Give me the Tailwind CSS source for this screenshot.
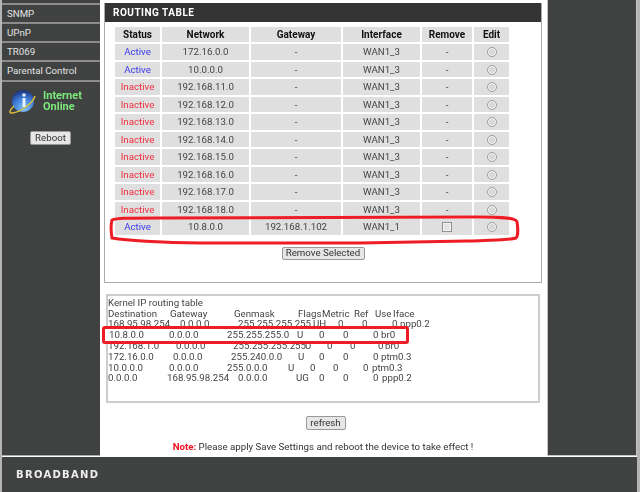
<!DOCTYPE html>
<html lang="en">
<head>
  <meta charset="UTF-8" />
  <title>Routing Table</title>
  <script src="https://cdn.jsdelivr.net/npm/@tailwindcss/browser@4"></script>
</head>
<body class="relative flex w-[640px] h-[492px] overflow-hidden bg-white font-['Roboto',sans-serif] text-[9.700px] leading-none text-[#444] blur-[0.35px]">

  <div class="w-[2px] shrink-0 bg-[#b4b4b4]"></div>

  <div class="w-[635px] shrink-0">
    <div class="flex h-[456px]">
      <!-- left menu -->
      <div class="w-[98px] shrink-0 bg-[#404242] text-[#e2e2e2] border-b border-[#aaa]">
        <div class="h-[3px]"></div>
        <div class="h-[2px] bg-[#8c8c8c]"></div>
        <div class="h-[19px] border-b-2 border-[#8c8c8c] pl-[5px] pt-[1px] flex items-center">SNMP</div>
        <div class="h-[19px] border-b-2 border-[#8c8c8c] pl-[5px] pt-[1px] flex items-center">UPnP</div>
        <div class="h-[19px] border-b-2 border-[#8c8c8c] pl-[5px] pt-[1px] flex items-center">TR069</div>
        <div class="h-[20px] border-b-2 border-[#8c8c8c] pl-[5px] flex items-center">Parental Control</div>
        <div class="flex items-center gap-[6px] pl-[7px] pt-[5px]">
          <svg width="28" height="28" viewBox="0 0 28 28">
            <defs>
              <radialGradient id="ball" cx="0.55" cy="0.85" r="0.85">
                <stop offset="0" stop-color="#7fc0f8" />
                <stop offset="0.55" stop-color="#3f7fdc" />
                <stop offset="1" stop-color="#1c2f78" />
              </radialGradient>
            </defs>
            <circle cx="14" cy="14" r="11" fill="url(#ball)" />
            <path d="M26 9C24 16 12 25 3 26C0 26 0 24 5 19" fill="none" stroke="#d8bb3e" stroke-width="1.500" />
            <circle cx="15" cy="8" r="1.700" fill="#e8f2ff" />
            <rect x="13.500" y="11" width="3" height="9" fill="#e8f2ff" />
          </svg>
          <div class="text-[#7ce87c] font-bold text-[11px] leading-[11.500px]">Internet<br />Online</div>
        </div>
        <div class="flex justify-center pt-[16px] pr-[1px]">
          <button class="w-[41px] h-[14px] bg-[#e6e6e6] border border-[#999] rounded-[2px] text-[#333]">Reboot</button>
        </div>
      </div>

      <!-- main column -->
      <div class="flex-1 pl-[4px] pt-[3px]">
        <div class="w-[438px] h-[280px] border-x-[1.500px] border-b-[1.500px] border-[#aaa]">
          <div class="h-[19px] bg-[#333] text-white font-bold text-[10px] tracking-[0.5px] pl-[8px] pt-[1px] flex items-center">ROUTING TABLE</div>
          <div class="mt-[3px] ml-[8px]">
            <table class="border-separate border-spacing-[2px] text-center w-[398px] table-fixed [&_td]:pt-[1px]">
              <colgroup>
                <col class="w-[45px]" /><col class="w-[87px]" /><col class="w-[90px]" /><col class="w-[77px]" /><col class="w-[50px]" /><col class="w-[35px]" />
              </colgroup>
              <thead class="font-bold text-[10px] text-[#111]">
                <tr class="h-[15px] [&_td]:bg-[#dfdfdf]"><td>Status</td><td>Network</td><td>Gateway</td><td>Interface</td><td>Remove</td><td>Edit</td></tr>
              </thead>
              <tbody class="[&_td]:bg-[#dfdfdf] [&_tr]:h-[15.500px]">
                <tr><td class="text-[#3a3af0]">Active</td><td>172.16.0.0</td><td>-</td><td>WAN1_3</td><td>-</td><td><span class="inline-block align-middle w-[10px] h-[10px] rounded-full border border-[#a0a0a0] bg-[#d8d8d8] shadow-[inset_0_0_0_1px_#f4f4f4]"></span></td></tr>
                <tr><td class="text-[#3a3af0]">Active</td><td>10.0.0.0</td><td>-</td><td>WAN1_3</td><td>-</td><td><span class="inline-block align-middle w-[10px] h-[10px] rounded-full border border-[#a0a0a0] bg-[#d8d8d8] shadow-[inset_0_0_0_1px_#f4f4f4]"></span></td></tr>
                <tr><td class="text-[#f03040]">Inactive</td><td>192.168.11.0</td><td>-</td><td>WAN1_3</td><td>-</td><td><span class="inline-block align-middle w-[10px] h-[10px] rounded-full border border-[#a0a0a0] bg-[#d8d8d8] shadow-[inset_0_0_0_1px_#f4f4f4]"></span></td></tr>
                <tr><td class="text-[#f03040]">Inactive</td><td>192.168.12.0</td><td>-</td><td>WAN1_3</td><td>-</td><td><span class="inline-block align-middle w-[10px] h-[10px] rounded-full border border-[#a0a0a0] bg-[#d8d8d8] shadow-[inset_0_0_0_1px_#f4f4f4]"></span></td></tr>
                <tr><td class="text-[#f03040]">Inactive</td><td>192.168.13.0</td><td>-</td><td>WAN1_3</td><td>-</td><td><span class="inline-block align-middle w-[10px] h-[10px] rounded-full border border-[#a0a0a0] bg-[#d8d8d8] shadow-[inset_0_0_0_1px_#f4f4f4]"></span></td></tr>
                <tr><td class="text-[#f03040]">Inactive</td><td>192.168.14.0</td><td>-</td><td>WAN1_3</td><td>-</td><td><span class="inline-block align-middle w-[10px] h-[10px] rounded-full border border-[#a0a0a0] bg-[#d8d8d8] shadow-[inset_0_0_0_1px_#f4f4f4]"></span></td></tr>
                <tr><td class="text-[#f03040]">Inactive</td><td>192.168.15.0</td><td>-</td><td>WAN1_3</td><td>-</td><td><span class="inline-block align-middle w-[10px] h-[10px] rounded-full border border-[#a0a0a0] bg-[#d8d8d8] shadow-[inset_0_0_0_1px_#f4f4f4]"></span></td></tr>
                <tr><td class="text-[#f03040]">Inactive</td><td>192.168.16.0</td><td>-</td><td>WAN1_3</td><td>-</td><td><span class="inline-block align-middle w-[10px] h-[10px] rounded-full border border-[#a0a0a0] bg-[#d8d8d8] shadow-[inset_0_0_0_1px_#f4f4f4]"></span></td></tr>
                <tr><td class="text-[#f03040]">Inactive</td><td>192.168.17.0</td><td>-</td><td>WAN1_3</td><td>-</td><td><span class="inline-block align-middle w-[10px] h-[10px] rounded-full border border-[#a0a0a0] bg-[#d8d8d8] shadow-[inset_0_0_0_1px_#f4f4f4]"></span></td></tr>
                <tr><td class="text-[#f03040]">Inactive</td><td>192.168.18.0</td><td>-</td><td>WAN1_3</td><td>-</td><td><span class="inline-block align-middle w-[10px] h-[10px] rounded-full border border-[#a0a0a0] bg-[#d8d8d8] shadow-[inset_0_0_0_1px_#f4f4f4]"></span></td></tr>
                <tr><td class="text-[#3a3af0]">Active</td><td>10.8.0.0</td><td>192.168.1.102</td><td>WAN1_1</td><td><span class="inline-block align-middle w-[10px] h-[10px] border border-[#909090] bg-[#e4e4e4] shadow-[inset_0_0_0_1px_#f4f4f4]"></span></td><td><span class="inline-block align-middle w-[10px] h-[10px] rounded-full border border-[#a0a0a0] bg-[#d8d8d8] shadow-[inset_0_0_0_1px_#f4f4f4]"></span></td></tr>
              </tbody>
            </table>
          </div>
          <div class="flex justify-center pt-[10px]">
            <button class="w-[83px] h-[13px] bg-[#e6e6e6] border border-[#999] rounded-[2px] text-[#333] whitespace-nowrap">Remove Selected</button>
          </div>
        </div>

        <!-- kernel routes -->
        <div class="mt-[11px] ml-[2px] w-[434px] h-[109px] border-2 border-[#cdcdcd] pt-[2px] leading-[10.700px]">
          <div>Kernel IP routing table</div>
          <div class="flex"><span class="w-[62px]">Destination</span><span class="w-[64px]">Gateway</span><span class="w-[64px]">Genmask</span><span class="w-[24px]">Flags</span><span class="w-[32px]">Metric</span><span class="w-[21px]">Ref</span><span class="w-[18px]">Use</span><span>Iface</span></div>
          <div class="flex"><span class="w-[72px]">168.95.98.254</span><span class="w-[58px]">0.0.0.0</span><span class="w-[75px]">255.255.255.255</span><span class="w-[25px]">UH</span><span class="w-[24px]">0</span><span class="w-[30px]">0</span><span class="w-[8px]">0</span><span>ppp0.2</span></div>
          <div class="h-[11px]"></div>
          <div class="flex"><span class="w-[68px]">192.168.1.0</span><span class="w-[57px]">0.0.0.0</span><span class="w-[72px]">255.255.255.255</span><span class="w-[22px]">U</span><span class="w-[23px]">0</span><span class="w-[28px]">0</span><span class="w-[7px]">0</span><span>br0</span></div>
          <div class="flex"><span class="w-[65px]">172.16.0.0</span><span class="w-[58px]">0.0.0.0</span><span class="w-[67px]">255.240.0.0</span><span class="w-[21px]">U</span><span class="w-[24px]">0</span><span class="w-[30px]">0</span><span class="w-[8px]">0</span><span>ptm0.3</span></div>
          <div class="flex"><span class="w-[61px]">10.0.0.0</span><span class="w-[58px]">0.0.0.0</span><span class="w-[61px]">255.0.0.0</span><span class="w-[22px]">U</span><span class="w-[23px]">0</span><span class="w-[30px]">0</span><span class="w-[9px]">0</span><span>ptm0.3</span></div>
          <div class="flex"><span class="w-[59px]">0.0.0.0</span><span class="w-[71px]">168.95.98.254</span><span class="w-[58px]">0.0.0.0</span><span class="w-[23px]">UG</span><span class="w-[24px]">0</span><span class="w-[30px]">0</span><span class="w-[9px]">0</span><span>ppp0.2</span></div>
        </div>

        <div class="flex justify-center pt-[13px]">
          <button class="w-[40px] h-[14px] bg-[#e6e6e6] border border-[#999] rounded-[2px] text-[#333]">refresh</button>
        </div>
        <p class="pt-[12px] w-[438px] text-center text-[#333]"><b class="text-[#f01020]">Note:</b> Please apply Save Settings and reboot the device to take effect !</p>
      </div>

      <!-- right column -->
      <div class="w-[90px] shrink-0 bg-[#404242] border-l border-b border-r border-[#c4c4c4]"></div>
    </div>

    <!-- footer -->
    <footer class="mt-[1px] h-[35px] bg-[#404242] pl-[14px] flex items-center">
      <span class="font-['DejaVu_Sans',sans-serif] font-bold text-[10px] tracking-[1.300px] text-[#eee]">BROADBAND</span>
    </footer>
  </div>

  <div class="flex-1 bg-[#b4b4b4]"></div>

  <!-- hand-drawn marks over the screenshot -->
  <div class="absolute left-[102px] top-[326px] w-[307px] h-[18px] bg-white border-[3px] border-[#ee1c25] rounded-[3px] flex items-center pl-[4px]">
    <span class="w-[60px]">10.8.0.0</span><span class="w-[58px]">0.0.0.0</span><span class="w-[70px]">255.255.255.0</span><span class="w-[22px]">U</span><span class="w-[24px]">0</span><span class="w-[30px]">0</span><span class="w-[8px]">0</span><span>br0</span>
  </div>
  <svg class="absolute left-0 top-0 pointer-events-none" width="640" height="492" viewBox="0 0 640 492">
    <path d="M112 220C116 218 125 218 160 218L476 217C505 217 516 218 517 222C518 228 518 236 516 238C510 240 500 240 467 241L360 243L200 243C160 243 125 240 112 238C111 232 111 224 112 220Z" fill="none" stroke="#ee1c25" stroke-width="3" />
  </svg>
</body>
</html>
